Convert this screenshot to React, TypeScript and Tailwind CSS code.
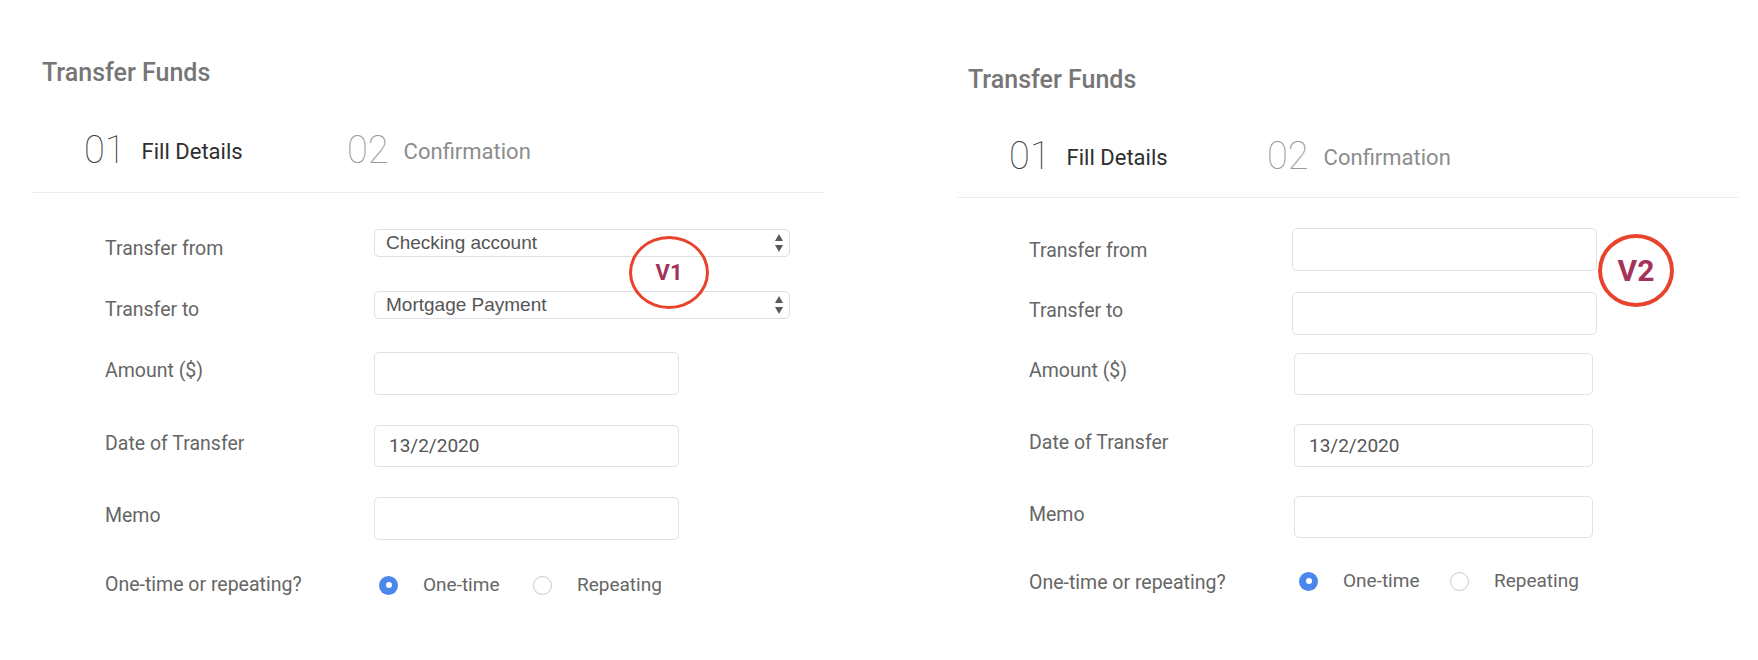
import React from 'react'

type Row = { label: string; kind: 'select' | 'input' | 'radio'; value?: string }

const rows: Row[] = [
  { label: 'Transfer from', kind: 'select', value: 'Checking account' },
  { label: 'Transfer to', kind: 'select', value: 'Mortgage Payment' },
  { label: 'Amount ($)', kind: 'input' },
  { label: 'Date of Transfer', kind: 'input', value: '13/2/2020' },
  { label: 'Memo', kind: 'input' },
  { label: 'One-time or repeating?', kind: 'radio' },
]

// per-version spacing, read off the screenshot
const layout = {
  1: {
    wrap: 'ml-[32px] w-[792px] pt-[58px]',
    steps: 'mt-[40px] ml-[52px]',
    stepOne: 'w-[263px]',
    divider: 'mt-[20px]',
    rowsTop: 'mt-[36px] ml-[73px]',
    labelW: 'w-[269px]',
    rowBox: ['h-[28px]', 'mt-[34px] h-[28px]', 'mt-[33px] h-[43px]', 'mt-[30px] h-[42px]', 'mt-[30px] h-[43px]', 'mt-[33px] h-[24px]'],
    labelPad: ['pt-[8px]', 'pt-[7px]', 'pt-[7px]', 'pt-[7px]', 'pt-[7px]', ''],
    ctrl: ['', '', 'w-[305px] h-[43px]', 'w-[305px] h-[42px]', 'w-[305px] h-[43px]', ''],
    radio: 'ml-[5px]',
    optOne: 'w-[154px]',
    badge: 'left-[597px] top-[236px] w-[80px] h-[73px] border-[3px] text-[22px]',
  },
  2: {
    wrap: 'ml-[134px] w-[780px] pt-[65px]',
    steps: 'mt-[39px] ml-[51px]',
    stepOne: 'w-[258px]',
    divider: 'mt-[19px]',
    rowsTop: 'mt-[30px] ml-[71px]',
    labelW: 'w-[263px]',
    rowBox: ['h-[43px]', 'mt-[21px] h-[43px]', 'mt-[18px] h-[42px]', 'mt-[29px] h-[43px]', 'mt-[29px] h-[42px]', 'mt-[33px] h-[24px]'],
    labelPad: ['pt-[11px]', 'pt-[7px]', 'pt-[6px]', 'pt-[7px]', 'pt-[7px]', ''],
    ctrl: ['w-[305px] h-[43px]', 'w-[305px] h-[43px]', 'ml-[2px] w-[299px] h-[42px]', 'ml-[2px] w-[299px] h-[43px]', 'ml-[2px] w-[299px] h-[42px]', ''],
    radio: 'ml-[7px] -mt-[4px]',
    optOne: 'w-[151px]',
    badge: 'left-[640px] top-[234px] w-[76px] h-[73px] border-[4px] text-[30px]',
  },
} as const

function SelectArrows() {
  return (
    <svg width="8" height="18" viewBox="0 0 8 18" className="fill-[#5a5a5a]">
      <polygon points="4,0 8,7 0,7" />
      <polygon points="0,11 8,11 4,18" />
    </svg>
  )
}

function FakeSelect({ value }: { value: string }) {
  return (
    <div className="w-[416px] h-[28px] border border-[#dedee6] rounded-[5px] flex items-center justify-between pl-[11px] pr-[6px] bg-white">
      <span className="font-['Liberation_Sans',Arial,sans-serif] text-[19px] leading-[26px] text-[#555]">{value}</span>
      <SelectArrows />
    </div>
  )
}

function Radio({ checked }: { checked?: boolean }) {
  if (checked) {
    return (
      <span className="w-[19px] h-[19px] rounded-full bg-[#4a86ec] flex items-center justify-center shrink-0">
        <span className="w-[6px] h-[6px] rounded-full bg-white" />
      </span>
    )
  }
  return <span className="w-[19px] h-[19px] rounded-full border border-[#c9c9c9] bg-white shrink-0" />
}

function Panel({ v }: { v: 1 | 2 }) {
  const s = layout[v]
  return (
    <div className={`relative shrink-0 ${s.wrap}`}>
      <h2 className="ml-[10px] text-[25px] leading-[30px] font-medium text-[#767676]">Transfer Funds</h2>

      <div className={`flex items-center ${s.steps}`}>
        <div className={`flex items-center gap-[16px] ${s.stepOne}`}>
          <span className="text-[38px] leading-[44px] font-thin text-[#3a3a3a]">01</span>
          <span className="mt-[3px] text-[22px] leading-[26px] text-[#2e2e2e]">Fill Details</span>
        </div>
        <div className="flex items-center gap-[15px]">
          <span className="text-[38px] leading-[44px] font-thin text-[#9a9a9a]">02</span>
          <span className="mt-[3px] text-[22px] leading-[26px] text-[#8c8c8c]">Confirmation</span>
        </div>
      </div>

      <div className={`border-t border-[#ececec] ${s.divider}`} />

      <div className={s.rowsTop}>
        {rows.map((r, i) => {
          const blank = v === 2 && r.kind === 'select'
          return (
            <div key={r.label} className={`flex ${r.kind === 'radio' ? 'items-center' : 'items-start'} ${s.rowBox[i]}`}>
              <div className={`shrink-0 text-[19.5px] leading-[24px] text-[#666] ${s.labelW} ${s.labelPad[i]}`}>{r.label}</div>
              {r.kind === 'select' && !blank && <FakeSelect value={r.value ?? ''} />}
              {(r.kind === 'input' || blank) && (
                <div className={`border border-[#e1e1e9] rounded-[5px] bg-white flex items-center pl-[14px] ${s.ctrl[i]}`}>
                  {r.value && r.kind === 'input' && <span className="text-[19px] leading-[24px] text-[#555]">{r.value}</span>}
                </div>
              )}
              {r.kind === 'radio' && (
                <div className={`flex items-center text-[19px] leading-[24px] text-[#666] ${s.radio}`}>
                  <div className={`flex items-center gap-[25px] ${s.optOne}`}>
                    <Radio checked />
                    <span>One-time</span>
                  </div>
                  <div className="flex items-center gap-[25px]">
                    <Radio />
                    <span>Repeating</span>
                  </div>
                </div>
              )}
            </div>
          )
        })}
      </div>

      <div className={`absolute rounded-[50%] border-[#e8442d] flex items-center justify-center font-bold text-[#a3335b] ${s.badge}`}>
        V{v}
      </div>
    </div>
  )
}

export default function App() {
  return (
    <div className="w-[1758px] h-[660px] bg-white flex items-start font-['Roboto',sans-serif] overflow-hidden">
      <Panel v={1} />
      <Panel v={2} />
    </div>
  )
}
